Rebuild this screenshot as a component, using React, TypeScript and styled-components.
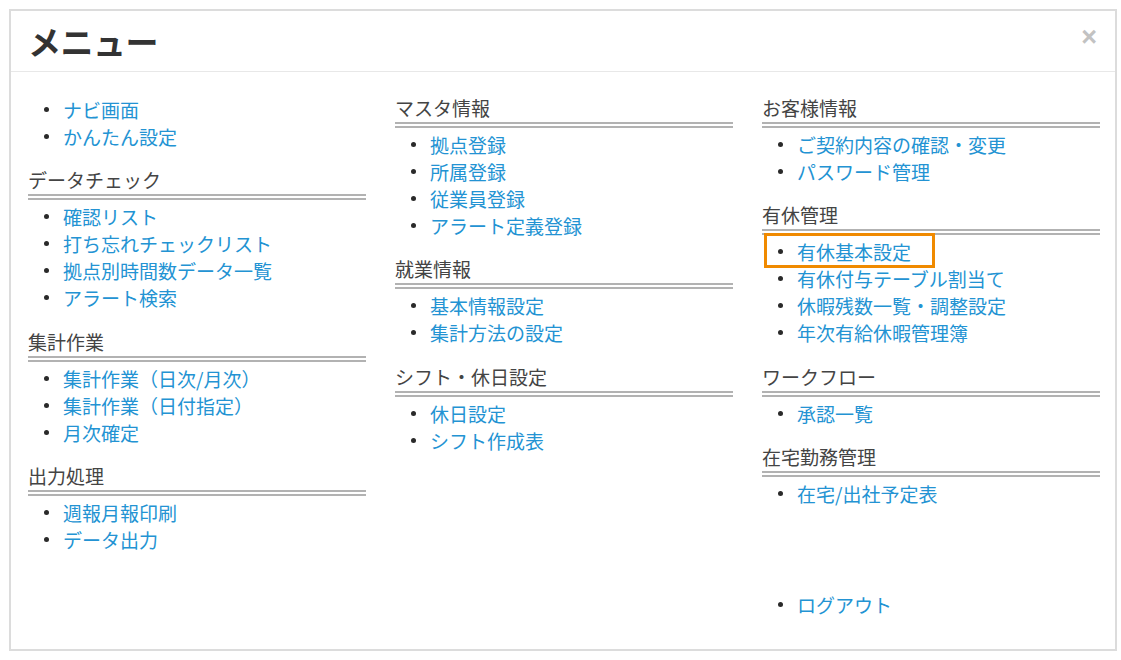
import styled, { createGlobalStyle } from 'styled-components';

const GlobalStyle = createGlobalStyle`
  html, body {
    margin: 0;
    background: #fff;
  }
  body {
    padding: 9px 0 0 9px;
    font-family: 'Noto Sans CJK JP', 'Noto Sans', sans-serif;
  }
`;

const Panel = styled.div`
  box-sizing: border-box;
  width: 1108px;
  height: 642px;
  border: 2px solid #dcdcdc;
  background: #fff;
`;

const Header = styled.div`
  display: flex;
  align-items: center;
  justify-content: space-between;
  height: 60px;
  padding: 0 18px 0 17px;
  border-bottom: 1px solid #e8e8e8;
`;

const Title = styled.h1`
  margin: 0;
  font-size: 33px;
  line-height: 40px;
  font-weight: 700;
  color: #333;
  letter-spacing: -0.5px;
`;

const CloseButton = styled.button`
  border: 0;
  background: none;
  padding: 0;
  margin-top: -8px;
  font-family: 'Liberation Sans', Arial, sans-serif;
  font-size: 27px;
  font-weight: 700;
  line-height: 1;
  color: #c2c2c2;
  cursor: pointer;
`;

const Body = styled.div`
  display: grid;
  grid-template-columns: repeat(3, 338px);
  column-gap: 29px;
  padding: 24px 17px 0;
`;

const Column = styled.div`
  display: flex;
  flex-direction: column;
`;

const Block = styled.section<{ $gap?: number }>`
  margin-top: ${(p) => p.$gap ?? 18}px;

  &:first-child {
    margin-top: 0;
  }
`;

const Heading = styled.h3`
  margin: 0 0 3px;
  padding-bottom: 2px;
  font-size: 19px;
  line-height: 24px;
  font-weight: 400;
  color: #444;
  border-bottom: 6px double #b2b2b2;
`;

const List = styled.ul`
  list-style: none;
  margin: 0;
  padding: 0;
`;

const Item = styled.li`
  position: relative;
  padding-left: 35px;
  font-size: 19px;
  line-height: 27.1px;

  &::before {
    content: '';
    position: absolute;
    left: 16px;
    top: 11px;
    width: 5px;
    height: 5px;
    border-radius: 50%;
    background: #2a2a2a;
  }
`;

const Link = styled.a`
  color: #2393d3;
  text-decoration: none;
  white-space: nowrap;
`;

// 注目枠（スクリーンショット上の注釈）
const Highlight = styled.span`
  position: absolute;
  left: 2px;
  top: -5px;
  width: 171px;
  height: 35px;
  box-sizing: border-box;
  border: 3px solid #f08a00;
  pointer-events: none;
`;

type Section = { title?: string; items: string[]; gap?: number };

const columns: Section[][] = [
  [
    { items: ['ナビ画面', 'かんたん設定'] },
    {
      title: 'データチェック',
      items: ['確認リスト', '打ち忘れチェックリスト', '拠点別時間数データ一覧', 'アラート検索']
    },
    {
      title: '集計作業',
      items: ['集計作業（日次/月次）', '集計作業（日付指定）', '月次確定']
    },
    { title: '出力処理', items: ['週報月報印刷', 'データ出力'] }
  ],
  [
    { title: 'マスタ情報', items: ['拠点登録', '所属登録', '従業員登録', 'アラート定義登録'] },
    { title: '就業情報', items: ['基本情報設定', '集計方法の設定'] },
    { title: 'シフト・休日設定', items: ['休日設定', 'シフト作成表'] }
  ],
  [
    { title: 'お客様情報', items: ['ご契約内容の確認・変更', 'パスワード管理'] },
    {
      title: '有休管理',
      items: ['有休基本設定', '有休付与テーブル割当て', '休暇残数一覧・調整設定', '年次有給休暇管理簿']
    },
    { title: 'ワークフロー', items: ['承認一覧'] },
    { title: '在宅勤務管理', items: ['在宅/出社予定表'] },
    { items: ['ログアウト'], gap: 84 }
  ]
];

const highlighted = '有休基本設定';

export default function App() {
  return (
    <>
      <GlobalStyle />
      <Panel>
        <Header>
          <Title>メニュー</Title>
          <CloseButton aria-label='閉じる'>×</CloseButton>
        </Header>
        <Body>
          {columns.map((sections, ci) => (
            <Column key={ci}>
              {sections.map((section, si) => (
                <Block key={si} $gap={section.gap}>
                  {section.title && <Heading>{section.title}</Heading>}
                  <List>
                    {section.items.map((label) => (
                      <Item key={label}>
                        <Link href='#'>{label}</Link>
                        {label === highlighted && <Highlight />}
                      </Item>
                    ))}
                  </List>
                </Block>
              ))}
            </Column>
          ))}
        </Body>
      </Panel>
    </>
  );
}
